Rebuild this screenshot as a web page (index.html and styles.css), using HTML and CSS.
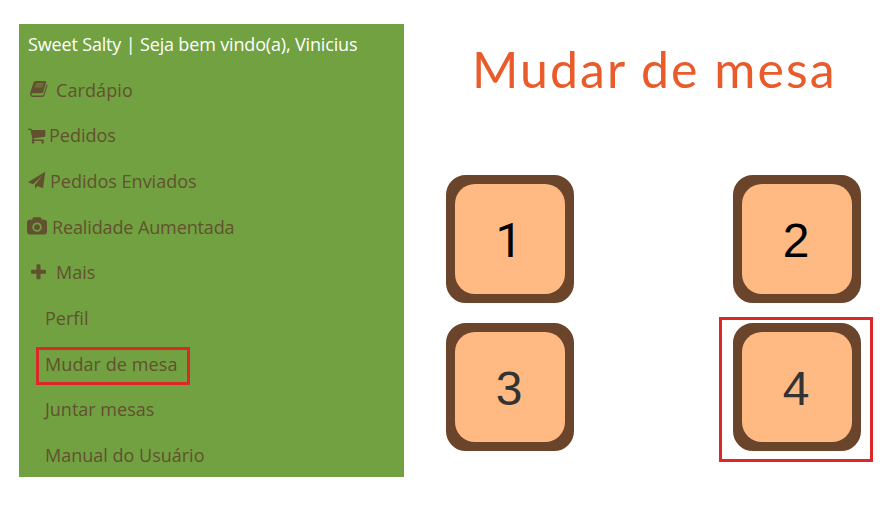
FILE: index.html
```html
<!DOCTYPE html>
<html lang="pt-BR">
<head>
<meta charset="utf-8">
<title>Mudar de mesa</title>
<link rel="stylesheet" href="styles.css">
</head>
<body>
<nav class="sidebar">
  <div class="row welcome"><span class="label">Sweet Salty | Seja bem vindo(a), Vinicius</span></div>
  <div class="row cardapio"><svg class="icon" viewBox="0 0 19 19"><path fill-rule="evenodd" d="M6.500 1H16q1.500 0 1.100 1.500L14.200 12.300Q13.900 13.300 12.800 13.300H3.300Q2.300 13.500 2.500 14.600 2.700 15.500 4 15.500H13.200Q14.300 15.500 14.600 14.400L17.700 4Q18.700 4.500 18.400 5.700L15.400 15.600Q15 17 13.500 17H3.500Q1.100 16.800 1 14.200 1 13 1.500 11.800L4.500 2.500Q5 1 6.500 1ZM7.200 3.500L6 7.300H13.300L14.500 3.500Z"/><path class="shade" d="M7.200 3.500L6 7.300H13.300L14.500 3.500Z"/></svg><span class="label">Cardápio</span></div>
  <div class="row pedidos"><svg class="icon" viewBox="0 0 1792 1792"><path d="M704 1536q0 52-38 90t-90 38-90-38-38-90 38-90 90-38 90 38 38 90zm896 0q0 52-38 90t-90 38-90-38-38-90 38-90 90-38 90 38 38 90zm128-1088v512q0 24-16.5 42.500t-40.500 21.500l-1044 122q13 60 13 70 0 16-24 64h920q26 0 45 19t19 45-19 45-45 19h-1024q-26 0-45-19t-19-45q0-11 8-31.500t16-36 21.500-40 15.500-29.500l-177-823h-204q-26 0-45-19t-19-45 19-45 45-19h256q16 0 28.500 6.500t19.500 15.500 13 24.500 8 26 5.500 29.500 4.500 26h1201q26 0 45 19t19 45z"/></svg><span class="label">Pedidos</span></div>
  <div class="row enviados"><svg class="icon" viewBox="0 0 19 19"><path d="M18.300 .8L16 17.200 10.500 15 8 17.800V13.800L15.600 4.500 6.200 13.200 .8 11.200Z"/></svg><span class="label">Pedidos Enviados</span></div>
  <div class="row realidade"><svg class="icon" viewBox="0 0 1920 1792"><path d="M960 672q119 0 203.500 84.500t84.500 203.500-84.500 203.500-203.500 84.500-203.500-84.500-84.500-203.500 84.500-203.500 203.500-84.500zm704-416q106 0 181 75t75 181v896q0 106-75 181t-181 75h-1408q-106 0-181-75t-75-181v-896q0-106 75-181t181-75h224l51-136q19-49 69.500-84.500t103.500-35.500h512q53 0 103.500 35.500t69.500 84.500l51 136h224zm-704 1152q185 0 316.500-131.500t131.500-316.500-131.500-316.500-316.500-131.500-316.500 131.500-131.500 316.500 131.500 316.500 316.500 131.500z"/></svg><span class="label">Realidade Aumentada</span></div>
  <div class="row mais"><svg class="icon" viewBox="0 0 1792 1792"><path d="M1600 736v192q0 40-28 68t-68 28h-416v416q0 40-28 68t-68 28h-192q-40 0-68-28t-28-68v-416h-416q-40 0-68-28t-28-68v-192q0-40 28-68t68-28h416v-416q0-40 28-68t68-28h192q40 0 68 28t28 68v416h416q40 0 68 28t28 68z"/></svg><span class="label">Mais</span></div>
  <div class="row sub perfil"><span class="label">Perfil</span></div>
  <div class="row sub mudar"><span class="label marked">Mudar de mesa</span></div>
  <div class="row sub juntar"><span class="label">Juntar mesas</span></div>
  <div class="row sub manual"><span class="label">Manual do Usuário</span></div>
</nav>
<main class="content">
  <h1 class="title">Mudar de mesa</h1>
  <div class="tables">
    <div class="slot"><div class="table strong one">1</div></div>
    <div class="slot"><div class="table strong">2</div></div>
    <div class="slot"><div class="table">3</div></div>
    <div class="slot selected"><div class="table">4</div></div>
  </div>
</main>
</body>
</html>
```
FILE: styles.css
```css
* { box-sizing: border-box; }
body {
  margin: 0;
  width: 886px;
  height: 518px;
  padding: 24px 0 0 19px;
  display: flex;
  align-items: flex-start;
  background: #fff;
  overflow: hidden;
}
.sidebar {
  width: 385px;
  height: 453px;
  flex: none;
  overflow: hidden;
  background: #71a141;
  color: #62512f;
  font: 18px/24px "Open Sans", sans-serif;
}
.row {
  height: 45.6px;
  padding-left: 8px;
  display: flex;
  align-items: center;
  white-space: nowrap;
}
.welcome { height: 43px; padding: 0 0 3px 9px; color: #fff; letter-spacing: -0.16px; }
.icon { width: 19px; height: 19px; flex: none; fill: #62512f; }
.shade { fill: #6b6a38; }
.sub { padding-left: 26px; }
.cardapio .icon { margin: 0 8px 0 2px; }
.cardapio .label { letter-spacing: 0.1px; }
.pedidos .icon { margin-right: 3px; }
.enviados .icon { margin-right: 4px; }
.realidade .icon { width: 20px; margin-right: 5px; }
.realidade .label { letter-spacing: -0.12px; }
.mais .icon { margin: 0 8px 0 2px; }
.marked {
  width: 154px;
  height: 38px;
  margin: 5px 0 0 -9px;
  padding-left: 6px;
  border: 3px solid #dc2828;
  line-height: 29px;
  letter-spacing: 0.08px;
}
.content { width: 482px; }
.title {
  margin: 11px 0 0 68px;
  color: #e95b2b;
  font: 400 50px/68px Lato, sans-serif;
  letter-spacing: 2.05px;
  white-space: nowrap;
}
.tables {
  margin: 66px 0 0 29px;
  display: grid;
  grid-template-columns: 154px 154px;
  grid-template-rows: 145px 145px;
  column-gap: 132px;
  row-gap: 3px;
}
.slot { padding: 6px 0 0 13px; }
.slot:nth-child(2) { padding-left: 14px; }
.selected { padding: 3px 0 0 11px; border: 3px solid #dc2828; }
.table {
  width: 128px;
  height: 128px;
  border: 9px solid #6b452b;
  border-radius: 20px;
  background: #6b452b;
  color: #333;
  font: 48px/113px "Liberation Sans", sans-serif;
  text-align: center;
  text-indent: -2px;
  position: relative;
  z-index: 0;
}
.table::before {
  content: "";
  position: absolute;
  inset: 0;
  z-index: -1;
  border-radius: 20px;
  background: #ffba84;
}
.strong { color: #000; }
.one { font-family: Roboto, sans-serif; }
```
